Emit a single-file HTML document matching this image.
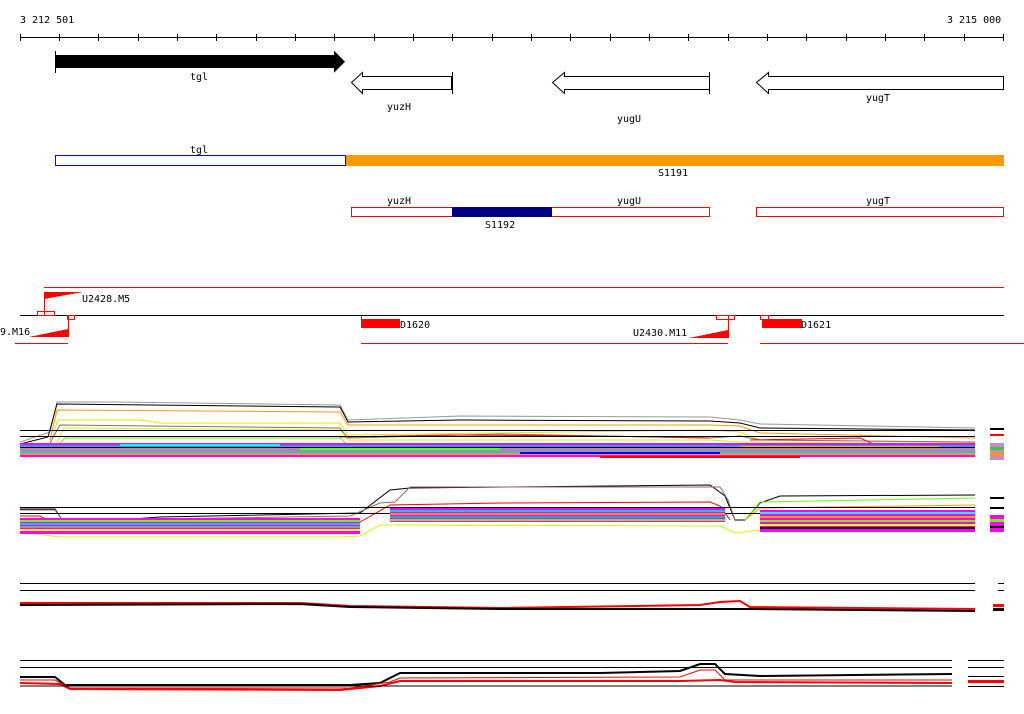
<!DOCTYPE html>
<html><head><meta charset="utf-8"><style>
html,body{margin:0;padding:0;background:#fff;width:1024px;height:714px;overflow:hidden}
svg{display:block}
text{font-family:"DejaVu Sans Mono","Liberation Mono",monospace;font-size:10px;fill:#000}
</style></head><body>
<svg width="1024" height="714" viewBox="0 0 1024 714" xmlns="http://www.w3.org/2000/svg" shape-rendering="crispEdges">
<text x="20" y="23">3 212 501</text>
<text x="947" y="23">3 215 000</text>
<line x1="20" y1="37.5" x2="1004" y2="37.5" stroke="#000"/>
<g stroke="#000">
<path d="M20.5 34v7M59.5 34v7M98.5 34v7M138.5 34v7M177.5 34v7M216.5 34v7M256.5 34v7M295.5 34v7M334.5 34v7M374.5 34v7M413.5 34v7M452.5 34v7M492.5 34v7M531.5 34v7M570.5 34v7M610.5 34v7M649.5 34v7M688.5 34v7M728.5 34v7M767.5 34v7M806.5 34v7M846.5 34v7M885.5 34v7M924.5 34v7M964.5 34v7M1003.5 34v7"/>
</g>
<!-- genes -->
<polygon points="55,55 334,55 334,51 345,61.5 334,73 334,68 55,68" fill="#000"/>
<line x1="55.5" y1="51" x2="55.5" y2="73" stroke="#000"/>
<text x="190" y="80">tgl</text>
<g fill="#fff" stroke="#000" shape-rendering="auto">
<polygon points="351.5,82.5 362.5,72.5 362.5,76.5 451.5,76.5 451.5,89.5 362.5,89.5 362.5,93.5"/>
<polygon points="552.5,82.5 564.5,72.5 564.5,76.5 709.5,76.5 709.5,89.5 564.5,89.5 564.5,93.5"/>
<polygon points="756.5,82.5 768.5,72.5 768.5,76.5 1003.5,76.5 1003.5,89.5 768.5,89.5 768.5,93.5"/>
</g>
<path d="M452.5 72v22M709.5 72v22" stroke="#000"/>
<text x="387" y="110">yuzH</text>
<text x="617" y="122">yugU</text>
<text x="866" y="101">yugT</text>
<!-- bands -->
<text x="190" y="153">tgl</text>
<rect x="55.5" y="155.5" width="290" height="10" fill="#fff" stroke="#0000ff"/>
<rect x="346" y="155" width="658" height="11" fill="#ff9900"/>
<text x="658" y="176">S1191</text>
<text x="387" y="204">yuzH</text>
<text x="617" y="204">yugU</text>
<text x="866" y="204">yugT</text>
<rect x="351.5" y="207.5" width="358" height="9" fill="#fff" stroke="#ff0000"/>
<rect x="452" y="207" width="100" height="10" fill="#000080"/>
<rect x="756.5" y="207.5" width="247" height="9" fill="#fff" stroke="#ff0000"/>
<text x="485" y="228">S1192</text>
<!-- promoters/terminators -->
<line x1="44" y1="287.5" x2="1004" y2="287.5" stroke="#ff0000"/>
<line x1="20" y1="315.5" x2="1004" y2="315.5" stroke="#000"/>
<polygon points="44,292 83,292 44,299" fill="#ff0000"/>
<line x1="44.5" y1="292" x2="44.5" y2="315" stroke="#ff0000"/>
<rect x="37.5" y="311.5" width="17" height="4" fill="none" stroke="#ff0000"/>
<text x="82" y="302">U2428.M5</text>
<polygon points="29,337 68,329 68,337" fill="#ff0000"/>
<line x1="68.5" y1="316" x2="68.5" y2="337" stroke="#ff0000"/>
<rect x="67.5" y="315.5" width="7" height="4" fill="none" stroke="#ff0000"/>
<text x="0" y="335">9.M16</text>
<line x1="15" y1="343.5" x2="68" y2="343.5" stroke="#ff0000"/>
<rect x="361" y="319" width="39" height="9" fill="#ff0000"/>
<line x1="361.5" y1="316" x2="361.5" y2="328" stroke="#ff0000"/>
<text x="400" y="328">D1620</text>
<line x1="361" y1="343.5" x2="728" y2="343.5" stroke="#ff0000"/>
<polygon points="689,338 728,330 728,338" fill="#ff0000"/>
<line x1="728.5" y1="316" x2="728.5" y2="338" stroke="#ff0000"/>
<rect x="716.5" y="315.5" width="18" height="4" fill="none" stroke="#ff0000"/>
<text x="633" y="336">U2430.M11</text>
<rect x="762" y="319" width="40" height="9" fill="#ff0000"/>
<rect x="760.5" y="315.5" width="8" height="4" fill="none" stroke="#ff0000"/>
<text x="801" y="328">D1621</text>
<line x1="760" y1="343.5" x2="1024" y2="343.5" stroke="#ff0000"/>
<!-- expression block 1 -->
<g fill="none" shape-rendering="auto">
<polyline points="20,442 50,432 57,402 120,402 340,405 348,420 460,416 710,417 740,420 760,424 975,428" stroke="#999"/>
<polyline points="20,444 48,437 57,404 340,407 348,422 460,420 710,421 740,423 760,428 975,430" stroke="#000"/>
<polyline points="50,440 57,410 340,412 348,425 710,425 740,426 760,433 975,438" stroke="#ff9900"/>
<polyline points="50,445 58,420 140,420 160,423 340,423 348,435 710,430 740,432 760,440 860,441 975,443" stroke="#ddee00"/>
<polyline points="50,443 60,425 340,428 348,438 500,434 710,438 740,436 760,440 975,442" stroke="#996666"/>
<polyline points="55,446 64,428 340,430 348,440 710,440 740,442 975,444" stroke="#ccff00"/>
<polyline points="55,448 65,438 340,438 348,445 710,444 975,446" stroke="#66ee00"/>
<polyline points="340,437 450,435 600,436 710,438" stroke="#ff0000"/>
<polyline points="750,440 860,438 880,447 975,448" stroke="#ff0000"/>
</g>
<line x1="20" y1="430.5" x2="975" y2="430.5" stroke="#000"/>
<line x1="20" y1="436.5" x2="975" y2="436.5" stroke="#000"/>
<g>
<rect x="20" y="443" width="955" height="2" fill="#ff00ff"/>
<rect x="20" y="445" width="955" height="2" fill="#3399ff"/>
<rect x="20" y="447" width="955" height="2" fill="#999999"/>
<rect x="20" y="449" width="955" height="2" fill="#ff6699"/>
<rect x="20" y="451" width="955" height="2" fill="#00ccff"/>
<rect x="20" y="453" width="955" height="2" fill="#ff9900"/>
<rect x="20" y="455" width="955" height="2" fill="#ff00ff"/>
<rect x="120" y="444" width="160" height="2" fill="#00ffff"/>
<rect x="300" y="448" width="200" height="2" fill="#66ff00"/>
<rect x="520" y="452" width="200" height="2" fill="#0000ff"/>
<rect x="740" y="446" width="200" height="2" fill="#cccc00"/>
<rect x="600" y="456" width="200" height="2" fill="#ff0000"/>
<rect x="20" y="447" width="955" height="1" fill="#000"/>
<rect x="990" y="428" width="14" height="2" fill="#000"/>
<rect x="990" y="434" width="14" height="2" fill="#ff0000"/>
<rect x="990" y="443" width="14" height="17" fill="#cc88cc"/>
<rect x="990" y="447" width="14" height="3" fill="#33cc33"/>
<rect x="990" y="453" width="14" height="3" fill="#ff9900"/>
</g>
<!-- block 2 -->
<g fill="none" shape-rendering="auto">
<polyline points="20,509 55,509 65,524 160,517 360,513 390,490 410,488 710,485 725,496 735,520 745,520 760,503 780,496 975,495" stroke="#000"/>
<polyline points="20,510 55,510 66,525 160,519 350,516 380,503 395,502 410,487 720,487 728,500 735,520" stroke="#996666"/>
<polyline points="20,516 40,516 60,528 350,521 360,522 390,505 500,503 710,502 720,506 730,520" stroke="#ff0000"/>
<polyline points="745,520 760,502 975,498" stroke="#66ff00"/>
<polyline points="745,520 760,508 975,505" stroke="#ff9900"/>
<polyline points="20,532 60,537 340,537 360,536 380,525 720,526 735,533 760,530 975,530" stroke="#ccff00"/>
</g>
<line x1="20" y1="507.5" x2="975" y2="507.5" stroke="#000"/>
<line x1="20" y1="513.5" x2="975" y2="513.5" stroke="#000"/>
<g>
<rect x="20" y="518" width="340" height="16" fill="#ff00ff"/>
<rect x="20" y="520" width="340" height="2" fill="#66ff00"/>
<rect x="20" y="523" width="340" height="2" fill="#00ccff"/>
<rect x="20" y="526" width="340" height="2" fill="#999999"/>
<rect x="20" y="529" width="340" height="2" fill="#ffff00"/>
<rect x="390" y="508" width="335" height="14" fill="#ff00ff"/>
<rect x="390" y="510" width="335" height="2" fill="#00ccff"/>
<rect x="390" y="513" width="335" height="2" fill="#ff9900"/>
<rect x="390" y="516" width="335" height="2" fill="#3399ff"/>
<rect x="390" y="519" width="335" height="2" fill="#66ff00"/>
<rect x="760" y="510" width="215" height="22" fill="#ff00ff"/>
<rect x="760" y="512" width="215" height="2" fill="#00ffff"/>
<rect x="760" y="516" width="215" height="2" fill="#ff9900"/>
<rect x="760" y="520" width="215" height="2" fill="#66ff00"/>
<rect x="760" y="524" width="215" height="2" fill="#ffff00"/>
<rect x="760" y="527" width="215" height="2" fill="#000"/>
<rect x="990" y="497" width="14" height="2" fill="#000"/>
<rect x="990" y="507" width="14" height="2" fill="#000"/>
<rect x="990" y="515" width="14" height="17" fill="#ff00ff"/>
<rect x="990" y="519" width="14" height="3" fill="#66ff00"/>
<rect x="990" y="526" width="14" height="2" fill="#000"/>
</g>
<!-- block 3 -->
<line x1="20" y1="583.5" x2="975" y2="583.5" stroke="#000"/>
<line x1="20" y1="590.5" x2="975" y2="590.5" stroke="#000"/>
<g fill="none" shape-rendering="auto" stroke-width="2">
<polyline points="20,603 300,603 350,606 500,608 700,605 720,602 740,601 750,607 975,609" stroke="#ff0000"/>
<polyline points="20,605 300,604 350,607 500,609 700,609 750,609 975,611" stroke="#000"/>
</g>
<path d="M998 583.5h6M998 590.5h6" stroke="#000"/>
<rect x="993" y="604" width="11" height="3" fill="#ff0000"/>
<rect x="993" y="608" width="11" height="3" fill="#000"/>
<!-- block 4 -->
<line x1="20" y1="660.5" x2="952" y2="660.5" stroke="#000"/>
<line x1="20" y1="667.5" x2="952" y2="667.5" stroke="#000"/>
<g fill="none" shape-rendering="auto">
<polyline points="20,677 55,677 65,685 350,685 380,683 400,673 600,673 680,671 700,664 715,664 725,674 760,676 952,674" stroke="#000" stroke-width="2"/>
<polyline points="20,680 55,680 70,688 350,688 390,682 400,678 680,677 700,670 715,670 725,680 952,680" stroke="#ff0000"/>
<polyline points="20,683 60,684 70,689 340,690 380,686 400,681 680,681 720,680 735,682 952,683" stroke="#ff0000" stroke-width="2"/>
<polyline points="20,686 952,686" stroke="#000"/>
</g>
<path d="M968 660.5h36M968 667.5h36M968 676.5h36M968 686.5h36" stroke="#000"/>
<rect x="968" y="680" width="36" height="3" fill="#ff0000"/>
</svg>
</body></html>
